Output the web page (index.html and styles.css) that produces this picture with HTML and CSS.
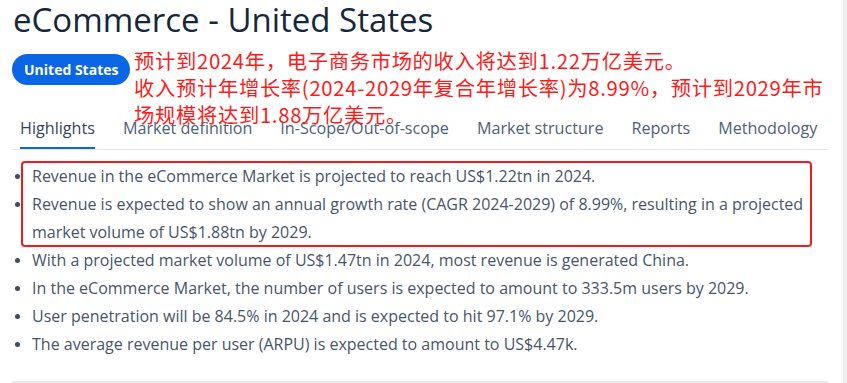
FILE: index.html
```html
<!DOCTYPE html>
<html lang="en">
<head>
<meta charset="utf-8">
<title>eCommerce - United States</title>
<link rel="stylesheet" href="styles.css">
</head>
<body>
<main class="page">
  <h1 class="title">eCommerce - United States</h1>
  <div class="badge-row">
    <span class="badge">United States</span>
    <p class="note">预计到2024年，电子商务市场的收入将达到1.22万亿美元。<br>收入预计年增长率(2024-2029年复合年增长率)为8.99%，预计到2029年市<br>场规模将达到1.88万亿美元。</p>
  </div>
  <nav class="tabs">
    <span class="tab active">Highlights</span>
    <span class="tab">Market definition</span>
    <span class="tab">In-Scope/Out-of-scope</span>
    <span class="tab">Market structure</span>
    <span class="tab">Reports</span>
    <span class="tab">Methodology</span>
  </nav>
  <section class="highlights">
    <ul class="list boxed">
      <li>Revenue in the eCommerce Market is projected to reach US$1.22tn in 2024.</li>
      <li>Revenue is expected to show an annual growth rate (CAGR 2024-2029) of 8.99%, resulting in a projected market volume of US$1.88tn by 2029.</li>
    </ul>
    <ul class="list">
      <li>With a projected market volume of US$1.47tn in 2024, most revenue is generated China.</li>
      <li>In the eCommerce Market, the number of users is expected to amount to 333.5m users by 2029.</li>
      <li>User penetration will be 84.5% in 2024 and is expected to hit 97.1% by 2029.</li>
      <li>The average revenue per user (ARPU) is expected to amount to US$4.47k.</li>
    </ul>
  </section>
</main>
<div class="scrollbar"></div>
</body>
</html>
```
FILE: styles.css
```css
html, body {
  margin: 0;
  padding: 0;
  background: #ffffff;
}
body {
  display: flex;
  height: 383px;
  overflow: hidden;
  font-family: "Open Sans", "Noto Sans", sans-serif;
}
.page {
  flex: 0 0 816px;
  padding-left: 12px;
}
.scrollbar {
  margin-left: auto;
  width: 4px;
  height: 383px;
  background: #efefef;
}
.title {
  margin: 0;
  padding-left: 1px;
  font-size: 33px;
  line-height: 40px;
  font-weight: 400;
  color: #16283b;
  white-space: nowrap;
}
.badge-row {
  position: relative;
  display: flex;
  align-items: flex-start;
  margin-top: 14px;
  height: 31px;
}
.badge {
  display: inline-block;
  height: 31px;
  line-height: 31px;
  padding: 0 12px;
  border-radius: 16px;
  background: #0a66e4;
  color: #ffffff;
  font-size: 14px;
  font-weight: 700;
  white-space: nowrap;
}
.note {
  position: absolute;
  left: 122px;
  top: -7px;
  margin: 0;
  font-family: "Noto Sans CJK SC", "Noto Sans", sans-serif;
  font-size: 20.3px;
  letter-spacing: 0.7px;
  line-height: 27px;
  color: #ff1a1a;
  white-space: nowrap;
}
.tabs {
  display: flex;
  gap: 28px;
  margin-top: 31px;
  padding-left: 8px;
  border-bottom: 1px solid #e6e8eb;
  white-space: nowrap;
}
.tab {
  font-size: 16.15px;
  line-height: 24px;
  padding-bottom: 7px;
  border-bottom: 2px solid transparent;
  color: #4e6179;
}
.tab.active {
  color: #34455a;
  border-bottom-color: #0a66e4;
}
.highlights {
  padding-top: 12px;
  height: 219px;
  border-bottom: 2px solid #ebebeb;
}
.list {
  list-style: none;
  margin: 0 17px 0 10px;
  padding: 0 0 0 10px;
  font-size: 16px;
  line-height: 28px;
  color: #46566b;
}
.list li {
  position: relative;
}
.list li::before {
  content: "";
  position: absolute;
  left: -17px;
  top: 12px;
  width: 5px;
  height: 5px;
  border-radius: 50%;
  background: #3f4d5e;
}
.boxed {
  outline: 2px solid #f51a1a;
  outline-offset: -1px;
  border-radius: 3px;
}
```
